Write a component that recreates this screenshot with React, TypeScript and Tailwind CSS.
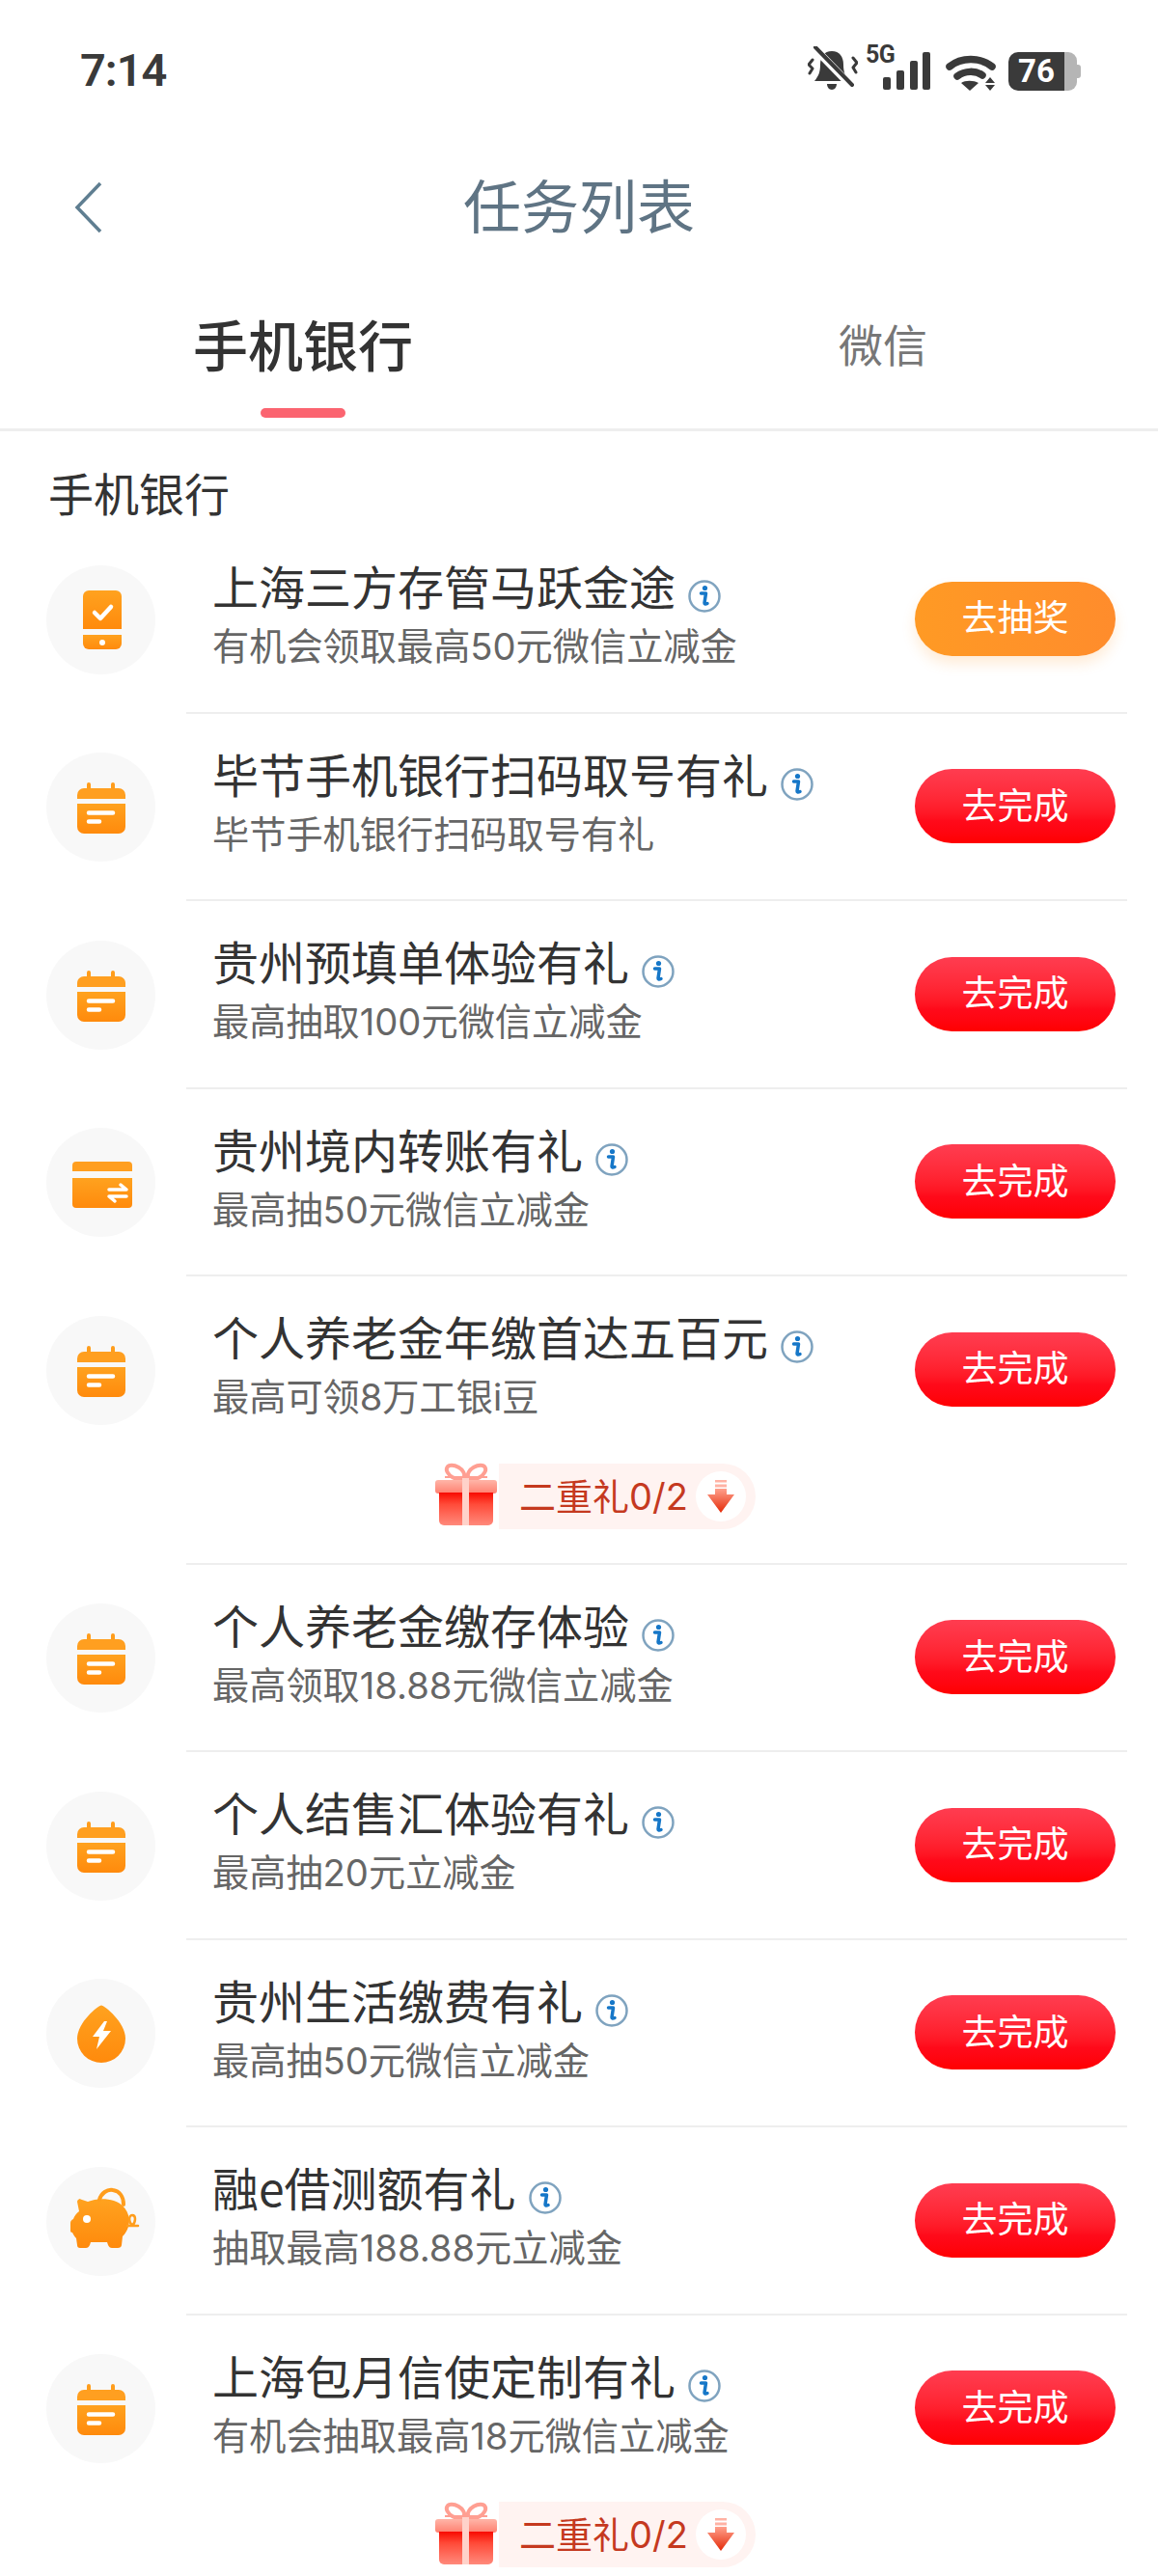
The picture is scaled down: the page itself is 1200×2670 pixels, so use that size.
import React from "react";

type IconKind = "phone" | "calendar" | "card" | "drop" | "pig";

type Task = {
  icon: IconKind;
  title: string;
  desc: string;
  action?: string;
  gift?: boolean;
};

const tasks: Task[] = [
  { icon: "phone", title: "上海三方存管马跃金途", desc: "有机会领取最高50元微信立减金", action: "去抽奖" },
  { icon: "calendar", title: "毕节手机银行扫码取号有礼", desc: "毕节手机银行扫码取号有礼" },
  { icon: "calendar", title: "贵州预填单体验有礼", desc: "最高抽取100元微信立减金" },
  { icon: "card", title: "贵州境内转账有礼", desc: "最高抽50元微信立减金" },
  { icon: "calendar", title: "个人养老金年缴首达五百元", desc: "最高可领8万工银i豆", gift: true },
  { icon: "calendar", title: "个人养老金缴存体验", desc: "最高领取18.88元微信立减金" },
  { icon: "calendar", title: "个人结售汇体验有礼", desc: "最高抽20元立减金" },
  { icon: "drop", title: "贵州生活缴费有礼", desc: "最高抽50元微信立减金" },
  { icon: "pig", title: "融e借测额有礼", desc: "抽取最高188.88元立减金" },
  { icon: "calendar", title: "上海包月信使定制有礼", desc: "有机会抽取最高18元微信立减金", gift: true },
];

const Defs = () => (
  <svg className="absolute w-0 h-0">
    <defs>
      <linearGradient id="orange" x1="0" y1="0" x2="0" y2="1">
        <stop offset="0" stopColor="#ffa21f" />
        <stop offset="1" stopColor="#ff8a0c" />
      </linearGradient>
      <linearGradient id="giftBody" x1="0" y1="0" x2="0" y2="1">
        <stop offset="0" stopColor="#f80a00" />
        <stop offset="0.35" stopColor="#ff4a38" />
        <stop offset="1" stopColor="#ff8a7c" />
      </linearGradient>
      <linearGradient id="giftLid" x1="0" y1="0" x2="0" y2="1">
        <stop offset="0" stopColor="#ffb5a8" />
        <stop offset="1" stopColor="#ff8070" />
      </linearGradient>
      <linearGradient id="arrowRed" x1="0" y1="0" x2="0" y2="1">
        <stop offset="0" stopColor="#ffa08c" />
        <stop offset="1" stopColor="#e42a08" />
      </linearGradient>
    </defs>
  </svg>
);

const TaskIcon = ({ kind }: { kind: IconKind }) => (
  <div className="w-[113px] h-[113px] rounded-full bg-[#f8f8f8]">
    <svg viewBox="0 0 113 113" className="w-[113px] h-[113px]">
      {kind === "phone" && (
        <g>
          <path d="M38 32a6 6 0 0 1 6-6h28a6 6 0 0 1 6 6v34H38z" fill="url(#orange)" />
          <path d="M38 72h40v9a6 6 0 0 1-6 6H44a6 6 0 0 1-6-6z" fill="url(#orange)" />
          <path d="M50 49l6 6 11-12" fill="none" stroke="#fff" strokeWidth="4.5" strokeLinecap="round" strokeLinejoin="round" />
          <circle cx="58" cy="80" r="3" fill="#fff" />
        </g>
      )}
      {kind === "calendar" && (
        <g>
          <path d="M44 38v-5M69 38v-5" stroke="#ff9d1c" strokeWidth="4" strokeLinecap="round" />
          <path d="M32 44a7 7 0 0 1 7-7h36a7 7 0 0 1 7 7v4H32z" fill="#ff9f20" />
          <path d="M32 53h50v24a7 7 0 0 1-7 7H39a7 7 0 0 1-7-7z" fill="url(#orange)" />
          <path d="M44 62.500h25M44 71.500h11" stroke="#fff" strokeWidth="4.500" strokeLinecap="round" />
        </g>
      )}
      {kind === "card" && (
        <g>
          <path d="M27 39a4 4 0 0 1 4-4h54a4 4 0 0 1 4 4v6H27z" fill="#ff9f20" />
          <path d="M27 52h62v27a4 4 0 0 1-4 4H31a4 4 0 0 1-4-4z" fill="url(#orange)" />
          <path d="M65 64h18l-6-5M83 71H65l6 5" fill="none" stroke="#fff" strokeWidth="3.500" strokeLinecap="round" strokeLinejoin="round" />
        </g>
      )}
      {kind === "drop" && (
        <g>
          <path d="M57 27.500C60 27.500 82 45 82 62a25 25 0 0 1-50 0C32 45 54 27.500 57 27.500z" fill="url(#orange)" />
          <path d="M60 44L48 60h7l-3 13 15-19h-8l4-10z" fill="#fff" />
        </g>
      )}
      {kind === "pig" && (
        <g>
          <path
            d="M34 33l9 3c7-3 18-4 27-1 9 3 15 10 16 20 0 7-3 13-7 17l-1 9c0 2-2 3-4 3h-6c-2 0-3-1-4-3l-1-3H46l-1 3c-1 2-2 3-4 3h-6c-2 0-3-1-3-3l-1-7c-2-2-3-4-4-6-2 0-2-1-2-3v-7c0-2 1-3 3-4 1-3 3-6 6-8l-2-10c0-2 2-3 4-3z"
            fill="url(#orange)"
          />
          <circle cx="42" cy="54" r="4" fill="#fff" />
          <path d="M55 34c2-7 8-11 14-10 7 1 11 7 11 15" fill="none" stroke="#ff9d1c" strokeWidth="4" strokeLinecap="round" />
          <path d="M84 61h11M90 61c-5-3-5-11-1-11s4 7 0 11" fill="none" stroke="#ff9d1c" strokeWidth="2.500" strokeLinecap="round" />
        </g>
      )}
    </svg>
  </div>
);

const InfoIcon = () => (
  <svg viewBox="0 0 34 34" className="w-[34px] h-[34px] shrink-0 mt-[27px]">
    <circle cx="17" cy="17" r="15.500" fill="none" stroke="#7fa3bf" strokeWidth="2.500" />
    <circle cx="17.500" cy="8.500" r="2.600" fill="#1677c8" />
    <path d="M13.500 14h5l-1.500 10c0 1 1 1.500 3 .500" fill="none" stroke="#1677c8" strokeWidth="3.500" strokeLinecap="round" strokeLinejoin="round" />
  </svg>
);

const GiftBadge = () => (
  <div className="flex items-center h-[68px] ml-[258px] relative">
    <svg viewBox="0 0 64 66" className="w-[64px] h-[66px] -mt-[3px] shrink-0">
      <ellipse cx="21" cy="10" rx="10" ry="6" transform="rotate(30 21 10)" fill="none" stroke="#ff9f92" strokeWidth="4" />
      <ellipse cx="43" cy="10" rx="10" ry="6" transform="rotate(-30 43 10)" fill="none" stroke="#ff9f92" strokeWidth="4" />
      <path d="M10 15h44" stroke="#ff9f92" strokeWidth="2" />
      <rect x="0" y="18" width="64" height="14" rx="3" fill="url(#giftLid)" />
      <path d="M4 31h56v29a5 5 0 0 1-5 5H9a5 5 0 0 1-5-5z" fill="url(#giftBody)" />
      <rect x="28" y="16" width="7" height="49" fill="#ffd2ca" />
    </svg>
    <div className="flex items-center h-[68px] w-[266px] ml-[2px] pl-[21px] rounded-r-full bg-[#fff3f1] font-['Inter','Noto_Sans_CJK_SC',sans-serif] text-[38px] leading-[68px] text-[#c5391f]">
      <span className="w-[183px] shrink-0 whitespace-nowrap">二重礼0/2</span>
      <div className="w-[52px] h-[52px] rounded-full bg-white flex items-center justify-center shrink-0">
        <svg viewBox="0 0 28 34" className="w-[28px] h-[34px]">
          <path d="M8 1h12M8 6h12" stroke="#ffb2a4" strokeWidth="3" />
          <path d="M8 9h12v6h8L14 34 0 15h8z" fill="url(#arrowRed)" />
        </svg>
      </div>
    </div>
  </div>
);

const TaskRow = ({ task }: { task: Task }) => (
  <div className="flex">
    <div className="w-[193px] h-[194.500px] shrink-0 pl-[48px] flex items-center">
      <TaskIcon kind={task.icon} />
    </div>
    <div className="flex-1 mr-[32px] border-b-2 border-[#eeeeee]">
      <div className="flex items-center justify-between h-[192.500px] pl-[27px] pr-[12px]">
        <div className="pb-[4px]">
          <div className="flex gap-[13px] h-[64px] -mt-[1px]">
            <span className="text-[48px] leading-[64px] text-[#333333] whitespace-nowrap">{task.title}</span>
            <InfoIcon />
          </div>
          <div className="font-['Inter','Noto_Sans_CJK_SC',sans-serif] text-[38.200px] leading-[65px] text-[#666666] whitespace-nowrap">
            {task.desc}
          </div>
        </div>
        {task.action ? (
          <button className="w-[208px] h-[77px] pb-[5px] rounded-full bg-linear-to-r from-[#ff9a24] to-[#ff8c2c] text-white text-[37px] shadow-[0_8px_14px_rgba(255,150,40,0.18)]">
            {task.action}
          </button>
        ) : (
          <button className="w-[208px] h-[77px] pb-[5px] rounded-full bg-linear-to-b from-[#ff3c50] via-[#ff0a1a] via-70% to-[#ff0000] text-white text-[37px]">
            去完成
          </button>
        )}
      </div>
      {task.gift && (
        <div className="h-[104px] pt-[1px]">
          <GiftBadge />
        </div>
      )}
    </div>
  </div>
);

const StatusBar = () => (
  <div className="h-[146px] pb-[2px] flex items-center justify-between pl-[83px] pr-[80px] text-[#3a3a3a]">
    <span className="font-['Roboto',sans-serif] font-semibold text-[47px] leading-[47px] tracking-[-1px]">7:14</span>
    <div className="flex items-end gap-[8px] pb-[2px] relative">
      <svg viewBox="0 0 52 46" className="w-[52px] h-[46px] -ml-[2px]">
        <path d="M25 5c-8 0-12 6-12 14 0 8-2 12-6 17h36c-4-5-6-9-6-17 0-8-4-14-12-14z" fill="#3a3a3a" />
        <path d="M20 39h10c0 3-2 6-5 6s-5-3-5-6z" fill="#3a3a3a" />
        <path d="M7 2l39 40" stroke="#ffffff" strokeWidth="8" />
        <path d="M8 1l38 39" stroke="#3a3a3a" strokeWidth="4" strokeLinecap="round" />
        <path d="M5 14L1 19l4 4-3 5M47 12l4 5-4 5 3 5" fill="none" stroke="#3a3a3a" strokeWidth="3" strokeLinecap="round" strokeLinejoin="round" />
      </svg>
      <div className="relative w-[66px] h-[46px] ml-[1px]">
        <span className="absolute left-[-1px] top-[-4px] font-['Roboto',sans-serif] font-bold text-[25px] leading-[25px] tracking-[-0.5px]">5G</span>
        <svg viewBox="0 0 66 46" className="w-[66px] h-[46px]">
          <rect x="17" y="32" width="8" height="13" rx="2" fill="#3a3a3a" />
          <rect x="31" y="25" width="8" height="20" rx="2" fill="#3a3a3a" />
          <rect x="45" y="15" width="8" height="30" rx="2" fill="#3a3a3a" />
          <rect x="58" y="6" width="8" height="39" rx="2" fill="#3a3a3a" />
        </svg>
      </div>
      <svg viewBox="0 0 52 38" className="w-[52px] h-[38px] ml-[8px]">
        <path d="M4 13C16 3 36 3 48 13" fill="none" stroke="#3a3a3a" strokeWidth="7.500" strokeLinecap="round" />
        <path d="M12 23c8-6 19-6 26-1" fill="none" stroke="#3a3a3a" strokeWidth="7.500" strokeLinecap="round" />
        <path d="M16 30c4-3 13-3 18 0l-9 8z" fill="#3a3a3a" />
        <path d="M46 24l5 6H41zM41 32h10l-5 6z" fill="#3a3a3a" />
      </svg>
      <div className="flex items-center h-[40px] ml-[5px]">
        <div className="w-[58px] h-[40px] rounded-l-[10px] bg-[#3a3a3a] text-white font-['Roboto',sans-serif] font-bold text-[33px] leading-[40px] text-center">
          76
        </div>
        <div className="w-[13px] h-[40px] rounded-r-[9px] bg-[#b5b5b5]" />
        <div className="w-[4px] h-[14px] rounded-r-[3px] bg-[#b5b5b5]" />
      </div>
    </div>
  </div>
);

const App: React.FC = () => {
  return (
    <div className="w-[1200px] h-[2670px] overflow-hidden bg-white font-['Noto_Sans_CJK_SC',sans-serif]">
      <Defs />
      <StatusBar />
      <div className="relative h-[136px] flex items-center justify-center">
        <svg viewBox="0 0 30 54" className="absolute left-[76px] top-[42px] w-[30px] h-[54px]">
          <path d="M28 2L4 27l24 25" fill="none" stroke="#5f7e91" strokeWidth="3.500" />
        </svg>
        <span className="text-[60px] leading-[80px] mb-[6px] text-[#5f7484]">任务列表</span>
      </div>
      <div className="h-[165px] flex pl-[200px] gap-[441px] border-b-[3px] border-[#eeeeee]">
        <div className="flex flex-col items-center">
          <span className="text-[57px] leading-[76px] mt-[35px] font-medium text-[#333333]">手机银行</span>
          <div className="w-[88px] h-[10px] mt-[30px] rounded-full bg-[#fb6470]" />
        </div>
        <span className="text-[46px] leading-[76px] mt-[35px] text-[#777777]">微信</span>
      </div>
      <div className="h-[98px] pl-[50px] pt-[30px] text-[47px] leading-[66px] text-[#333333]">手机银行</div>
      {tasks.map((task) => (
        <TaskRow key={task.title} task={task} />
      ))}
    </div>
  );
};

export default App;
